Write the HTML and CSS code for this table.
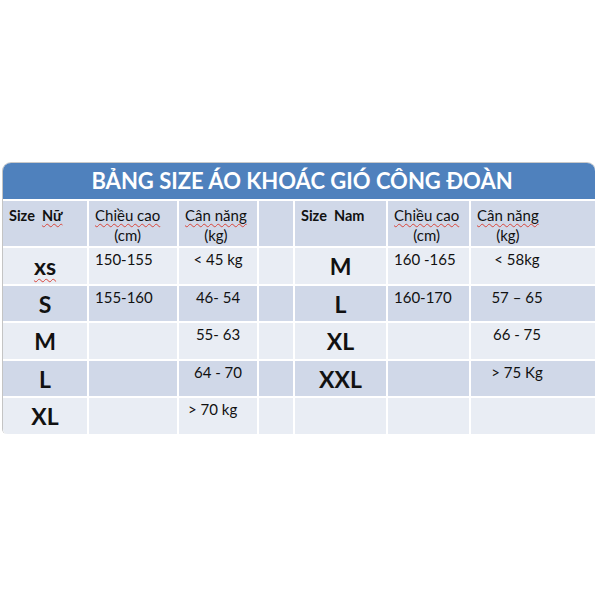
FILE: index.html
```html
<!DOCTYPE html>
<html lang="vi">
<head>
<meta charset="utf-8">
<title>Bảng size áo khoác gió công đoàn</title>
<link rel="stylesheet" href="styles.css">
</head>
<body>
<div class="table">
  <div class="title">BẢNG SIZE ÁO KHOÁC GIÓ CÔNG ĐOÀN</div>
  <div class="grid">
    <div class="c dark lab-h">Size&nbsp;&nbsp;<span class="sq">Nữ</span></div>
    <div class="c dark hd"><span class="stack"><span class="sq">Chiều cao</span><br>(cm)</span></div>
    <div class="c dark hd"><span class="stack"><span class="sq">Cân năng</span><br>(kg)</span></div>
    <div class="c dark"></div>
    <div class="c dark lab-h">Size&nbsp;&nbsp;Nam</div>
    <div class="c dark hd"><span class="stack"><span class="sq">Chiều cao</span><br>(cm)</span></div>
    <div class="c dark hd"><span class="stack"><span class="sq">Cân năng</span><br>(kg)</span></div>

    <div class="c light lab"><span class="sq sm">xs</span></div>
    <div class="c light v2">150-155</div>
    <div class="c light v3">&lt; 45 kg</div>
    <div class="c light"></div>
    <div class="c light lab">M</div>
    <div class="c light v2">160 -165</div>
    <div class="c light v7">&lt; 58kg</div>

    <div class="c dark lab">S</div>
    <div class="c dark v2">155-160</div>
    <div class="c dark v3">46- 54</div>
    <div class="c dark"></div>
    <div class="c dark lab">L</div>
    <div class="c dark v2">160-170</div>
    <div class="c dark v7">57 – 65</div>

    <div class="c light lab">M</div>
    <div class="c light v2"></div>
    <div class="c light v3">55- 63</div>
    <div class="c light"></div>
    <div class="c light lab">XL</div>
    <div class="c light v2"></div>
    <div class="c light v7">66 - 75</div>

    <div class="c dark lab">L</div>
    <div class="c dark v2"></div>
    <div class="c dark v3">64 - 70</div>
    <div class="c dark"></div>
    <div class="c dark lab">XXL</div>
    <div class="c dark v2"></div>
    <div class="c dark v7">&gt; 75 Kg</div>

    <div class="c light lab">XL</div>
    <div class="c light v2"></div>
    <div class="c light v3 left">&gt; 70 kg</div>
    <div class="c light"></div>
    <div class="c light lab"></div>
    <div class="c light v2"></div>
    <div class="c light v7"></div>
  </div>
</div>
</body>
</html>
```
FILE: styles.css
```css
html, body {
  margin: 0;
  padding: 0;
  background: #ffffff;
}
body {
  padding-top: 162px;
  padding-left: 2px;
  font-family: Lato, "Open Sans", "Liberation Sans", sans-serif;
  color: #111;
}
.table {
  width: 592px;
  border-top: 1px solid #c9c9c9;
  border-left: 1px solid #c4c4c4;
  border-right: 1px solid #d6d6d6;
  border-radius: 9px 9px 0 5px;
  overflow: hidden;
  background: #ffffff;
}
.title {
  height: 36px;
  background: #4f81bd;
  color: #ffffff;
  font-weight: 700;
  font-size: 22px;
  line-height: 36px;
  text-align: center;
  padding-left: 6px;
}
.grid {
  margin-top: 2px;
  display: grid;
  grid-template-columns: 84px 88px 78px 34px 91px 81px 1fr;
  grid-template-rows: 45px repeat(5, 35.5px);
  gap: 2px;
  background: #ffffff;
}
.c {
  font-size: 15px;
  line-height: 20px;
}
.dark { background: #d0d8e8; }
.light { background: #e9edf4; }
.lab-h {
  font-weight: 700;
  font-size: 14.5px;
  padding: 5px 0 0 6px;
}
.hd {
  padding: 4px 0 0 6px;
}
.stack {
  display: inline-block;
  text-align: center;
}
.lab {
  font-weight: 700;
  font-size: 23px;
  display: flex;
  align-items: center;
  justify-content: center;
  padding-top: 1px;
}
.v2 {
  padding: 1px 0 0 6px;
}
.v3 {
  padding-top: 1px;
  text-align: center;
}
.v3.left {
  text-align: left;
  padding-left: 9px;
}
.v7 {
  padding: 1px 32px 0 0;
  text-align: center;
}
.sq {
  text-decoration: underline wavy #d9453a 1px;
  text-underline-offset: 2px;
  text-decoration-skip-ink: none;
}
.sq.sm {
  text-underline-offset: 3px;
}
```
